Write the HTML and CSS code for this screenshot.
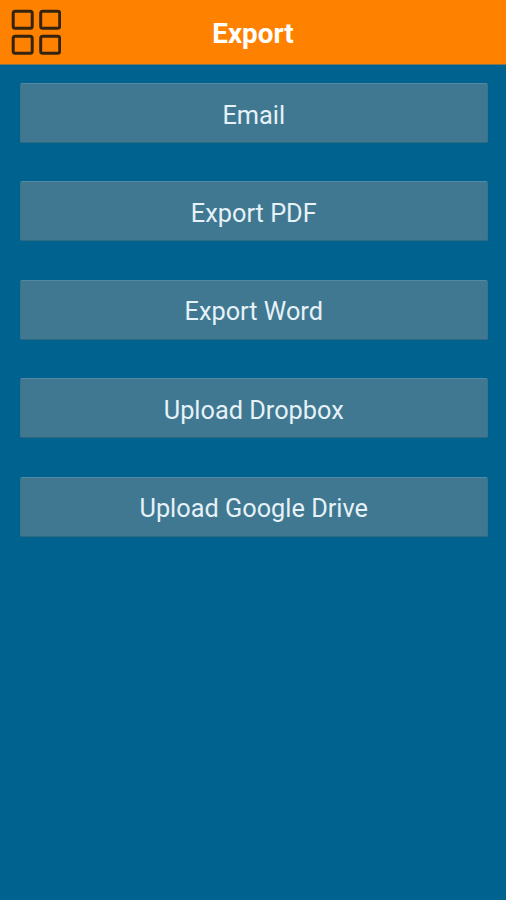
FILE: index.html
```html
<!DOCTYPE html>
<html>
<head>
    <meta charset="utf-8">
    <title>Export</title>
    <link rel="stylesheet" href="styles.css">
</head>
<body>
    <div class="header">
        <svg class="menu-icon" width="50" height="46" viewBox="0 0 50 46">
            <rect x="2.2" y="2.3" width="19" height="17" rx="2"/>
            <rect x="29.7" y="2.3" width="19" height="17" rx="2"/>
            <rect x="2.2" y="27.2" width="19" height="17" rx="2"/>
            <rect x="29.7" y="27.2" width="19" height="17" rx="2"/>
        </svg>
        <h1>Export</h1>
    </div>
    <div class="container">
        <button type="button">Email</button>
        <button type="button">Export PDF</button>
        <button type="button">Export Word</button>
        <button type="button">Upload Dropbox</button>
        <button type="button">Upload Google Drive</button>
    </div>
</body>
</html>
```

FILE: styles.css
```css
body {
    margin: 0;
    height: 900px;
    overflow: hidden;
    background-color: #00628e;
    font-family: Roboto, sans-serif;
}
.header {
    display: grid;
    grid-template-columns: 50px 1fr 50px;
    align-items: center;
    height: 64px;
    padding: 0 11px;
    background-color: #ff8100;
    border-bottom: 1px solid #8a7350;
}
.menu-icon {
    fill: none;
    stroke: #33230f;
    stroke-width: 3;
}
h1 {
    margin: 4px 0 0;
    color: #fff;
    font-size: 27.8px;
    font-weight: bold;
    line-height: 32px;
    text-align: center;
}
.container {
    display: flex;
    flex-direction: column;
    gap: 38.4px;
    padding: 18px 18.5px 0 20px;
}
button {
    box-sizing: border-box;
    height: 60px;
    padding: 5px 0 0;
    border: 1px solid #3a738a;
    border-top-color: #5189a6;
    border-bottom-color: #2f6a80;
    border-radius: 2px;
    background-color: #3f7890;
    color: #e6f1f8;
    font-family: inherit;
    font-size: 25.3px;
    line-height: 30px;
}
```
